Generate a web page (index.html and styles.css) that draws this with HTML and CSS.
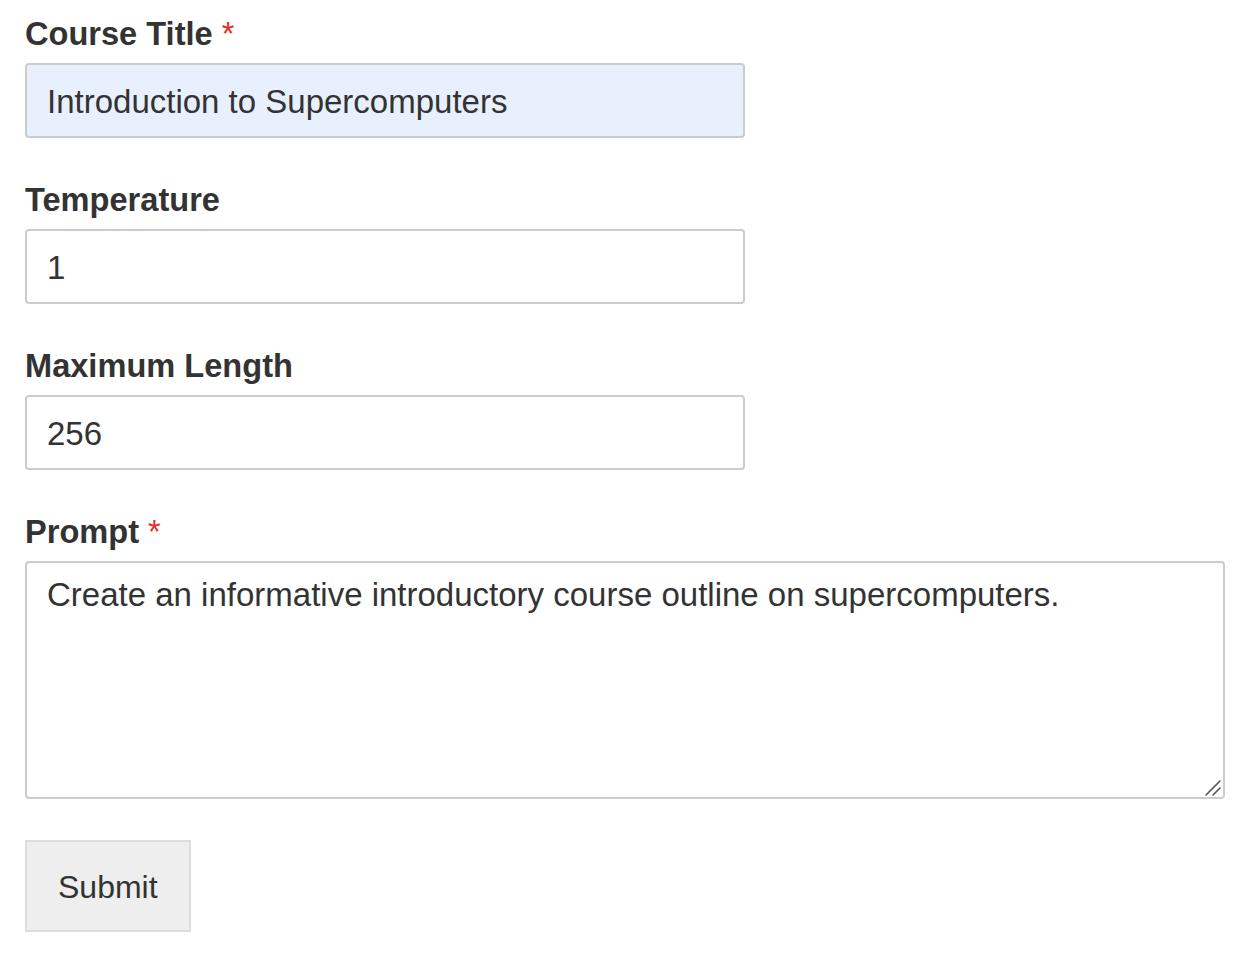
FILE: index.html
```html
<!DOCTYPE html>
<html lang="en">
<head>
<meta charset="utf-8">
<title>Course form</title>
<link rel="stylesheet" href="styles.css">
</head>
<body>
<form class="form">
  <div class="field">
    <label class="label" for="title">Course Title <span class="req">*</span></label>
    <input class="input input-filled" id="title" type="text" value="Introduction to Supercomputers">
  </div>
  <div class="field">
    <label class="label" for="temp">Temperature</label>
    <input class="input" id="temp" type="text" value="1">
  </div>
  <div class="field">
    <label class="label" for="len">Maximum Length</label>
    <input class="input" id="len" type="text" value="256">
  </div>
  <div class="field">
    <label class="label" for="prompt">Prompt <span class="req">*</span></label>
    <div class="textarea-wrap">
      <textarea class="textarea" id="prompt">Create an informative introductory course outline on supercomputers.</textarea>
      <svg class="grip" width="18" height="18" viewBox="0 0 18 18" aria-hidden="true">
        <line x1="2" y1="16" x2="16" y2="2" stroke="#555" stroke-width="1.6" stroke-linecap="round"/>
        <line x1="9" y1="16" x2="16" y2="9" stroke="#555" stroke-width="1.6" stroke-linecap="round"/>
      </svg>
    </div>
  </div>
  <div class="actions">
    <button class="button" type="button">Submit</button>
  </div>
</form>
</body>
</html>
```

FILE: styles.css
```css
* { box-sizing: border-box; }

html, body {
  margin: 0;
  padding: 0;
  background: #ffffff;
}

body {
  font-family: "Liberation Sans", Arial, Helvetica, sans-serif;
  color: #333333;
}

.form {
  padding: 14px 0 0 25px;
  display: flex;
  flex-direction: column;
  gap: 42px;
}

.field {
  display: flex;
  flex-direction: column;
  align-items: flex-start;
}

.label {
  display: block;
  font-size: 32.6px;
  font-weight: 700;
  line-height: 40px;
  margin-bottom: 9px;
  color: #333333;
}

.req {
  color: #e5312e;
  font-weight: 400;
}

.input {
  width: 720px;
  height: 75px;
  padding: 2px 20px 0;
  border: 2px solid #cccccc;
  border-radius: 4px;
  background: #ffffff;
  font-family: inherit;
  font-size: 33px;
  color: #333333;
  outline: none;
  margin: 0;
}

.input-filled {
  background: #e8f0fe;
}

.textarea-wrap {
  position: relative;
  width: 1200px;
  height: 238px;
}

.textarea {
  display: block;
  width: 100%;
  height: 100%;
  padding: 12px 20px;
  border: 2px solid #cccccc;
  border-radius: 4px;
  background: #ffffff;
  font-family: inherit;
  font-size: 33px;
  line-height: 40px;
  color: #333333;
  outline: none;
  margin: 0;
  resize: none;
}

.grip {
  position: absolute;
  right: 3px;
  bottom: 2px;
  pointer-events: none;
}

.actions {
  display: flex;
  margin-top: -1px;
}

.button {
  height: 92px;
  padding: 3px 31px 0;
  border: 2px solid #dddddd;
  border-radius: 0;
  background: #eeeeee;
  font-family: inherit;
  font-size: 32px;
  color: #333333;
  cursor: pointer;
}
```
